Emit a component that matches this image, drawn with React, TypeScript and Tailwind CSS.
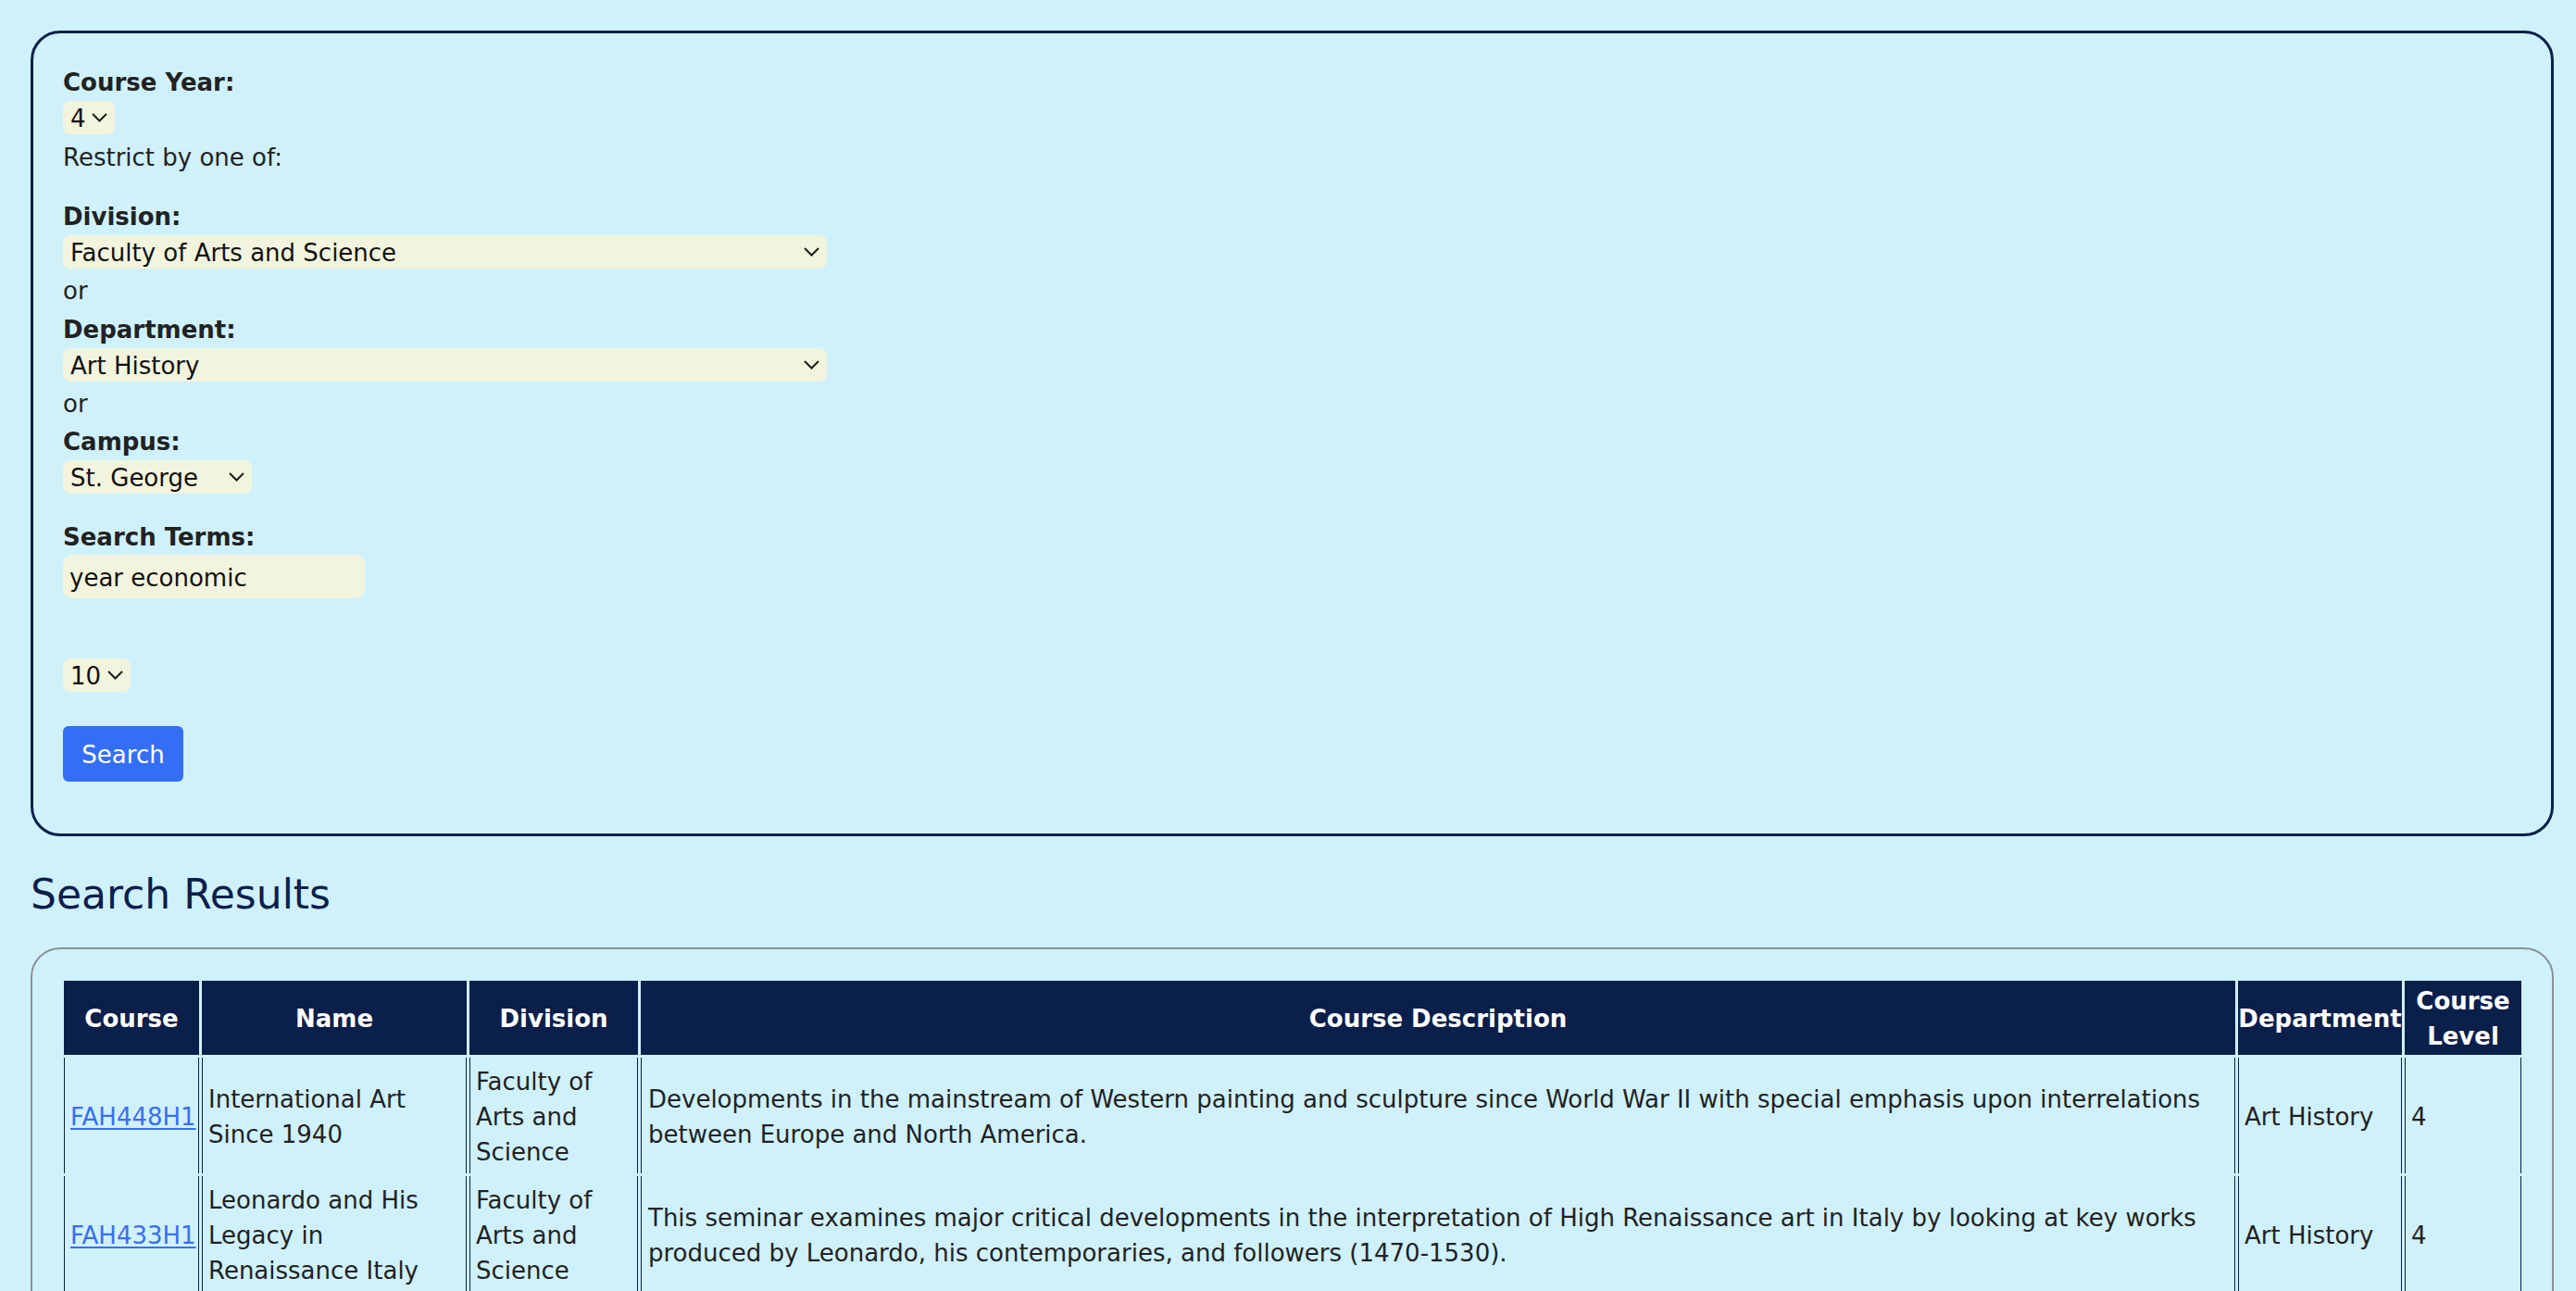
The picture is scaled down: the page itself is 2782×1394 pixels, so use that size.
import React from "react"

const rows = [
  {
    code: "FAH448H1",
    name: "International Art Since 1940",
    division: "Faculty of Arts and Science",
    description:
      "Developments in the mainstream of Western painting and sculpture since World War II with special emphasis upon interrelations between Europe and North America.",
    department: "Art History",
    level: "4",
  },
  {
    code: "FAH433H1",
    name: "Leonardo and His Legacy in Renaissance Italy",
    division: "Faculty of Arts and Science",
    description:
      "This seminar examines major critical developments in the interpretation of High Renaissance art in Italy by looking at key works produced by Leonardo, his contemporaries, and followers (1470-1530).",
    department: "Art History",
    level: "4",
  },
]

function Chevron() {
  return (
    <svg
      className="pointer-events-none absolute right-[8px] top-1/2 -translate-y-1/2"
      width="17"
      height="10"
      viewBox="0 0 17 10"
      fill="none"
    >
      <polyline points="1,1 8.5,8.5 16,1" stroke="#1c1c1c" strokeWidth="2" />
    </svg>
  )
}

function Dropdown({ value, className }: { value: string; className: string }) {
  return (
    <div className={`relative h-[36px] ${className}`}>
      <select className="h-full w-full appearance-none rounded-[8px] bg-[#f3f4dd] pl-[8px] text-[26px] text-[#111] outline-none">
        <option>{value}</option>
      </select>
      <Chevron />
    </div>
  )
}

function Label({ children, className = "" }: { children: React.ReactNode; className?: string }) {
  return <div className={`h-[39px] pt-[2px] leading-[37px] font-bold text-[#222] ${className}`}>{children}</div>
}

function Line({ children, className = "" }: { children: React.ReactNode; className?: string }) {
  return <div className={`h-[39px] pt-[2px] leading-[37px] text-[#222] ${className}`}>{children}</div>
}

export default function App() {
  return (
    <div className="min-h-screen bg-[#cff1fb] pt-[33px] pl-[33px] pr-[24px] font-['DejaVu_Sans',Verdana,sans-serif] text-[26px]">
      {/* Search form */}
      <form
        className="flex flex-col items-start rounded-[32px] border-[3px] border-[#0b1f4b] pt-[33px] pb-[56px] pl-[32px]"
        onSubmit={(e) => e.preventDefault()}
      >
        <Label>Course Year:</Label>
        <Dropdown value="4" className="mt-[1px] w-[56px]" />
        <Line className="mt-[5px]">Restrict by one of:</Line>

        <Label className="mt-[25px]">Division:</Label>
        <Dropdown value="Faculty of Arts and Science" className="mt-[1px] w-[825px]" />
        <Line className="mt-[4px]">or</Line>
        <Label className="mt-[3px]">Department:</Label>
        <Dropdown value="Art History" className="mt-[1px] w-[825px]" />
        <Line className="mt-[4px]">or</Line>
        <Label className="mt-[2px]">Campus:</Label>
        <Dropdown value="St. George" className="mt-[1px] w-[204px]" />

        <Label className="mt-[27px]">Search Terms:</Label>
        <input
          defaultValue="year economic"
          className="h-[47px] w-[326px] rounded-[10px] bg-[#f3f4dd] pl-[7px] pt-[2px] text-[26px] text-[#111] outline-none"
        />

        <Dropdown value="10" className="mt-[65px] w-[73px]" />

        <button className="mt-[37px] h-[60px] w-[130px] rounded-[6px] bg-[#356ef6] pt-[2px] text-[26px] text-white">
          Search
        </button>
      </form>

      <h2 className="mt-[36px] text-[44px] leading-[53px] text-[#0b1f4b]">Search Results</h2>

      {/* Results */}
      <div className="mt-[31px] rounded-[32px] border-2 border-[#8c9196] pt-[31px] pb-[31px] pl-[31px] pr-[30px]">
        <table className="w-full table-fixed border-separate border-spacing-[3px] text-[26px] leading-[38px]">
          <colgroup>
            <col className="w-[146px]" />
            <col className="w-[286px]" />
            <col className="w-[182px]" />
            <col />
            <col className="w-[177px]" />
            <col className="w-[126px]" />
          </colgroup>
          <thead>
            <tr className="bg-[#0b1f4b] text-white">
              <th className="pt-[3px] pb-[1px] px-[2px] font-bold">Course</th>
              <th className="pt-[3px] pb-[1px] px-[2px] font-bold">Name</th>
              <th className="pt-[3px] pb-[1px] px-[2px] font-bold">Division</th>
              <th className="pt-[3px] pb-[1px] px-[2px] font-bold">Course Description</th>
              <th className="pt-[3px] pb-[1px] px-0 font-bold whitespace-nowrap">Department</th>
              <th className="pt-[3px] pb-[1px] px-[2px] font-bold">Course Level</th>
            </tr>
          </thead>
          <tbody>
            {rows.map((r) => (
              <tr key={r.code} className="text-[#222]">
                <td className="border-x border-[#0b1f4b] pt-[7px] pb-[4px] pl-[6px] pr-[1px] align-middle">
                  <a href="#" className="text-[#3a6ef2] underline underline-offset-[3px]">
                    {r.code}
                  </a>
                </td>
                <td className="border-x border-[#0b1f4b] pt-[7px] pb-[4px] pl-[6px] pr-[2px] align-middle">{r.name}</td>
                <td className="border-x border-[#0b1f4b] pt-[7px] pb-[4px] pl-[6px] pr-[2px] align-middle">{r.division}</td>
                <td className="border-x border-[#0b1f4b] pt-[7px] pb-[4px] pl-[7px] pr-[2px] align-middle">{r.description}</td>
                <td className="border-x border-[#0b1f4b] pt-[7px] pb-[4px] pl-[6px] pr-[2px] align-middle">{r.department}</td>
                <td className="border-x border-[#0b1f4b] pt-[7px] pb-[4px] pl-[6px] pr-[2px] align-middle">{r.level}</td>
              </tr>
            ))}
          </tbody>
        </table>
      </div>
    </div>
  )
}
